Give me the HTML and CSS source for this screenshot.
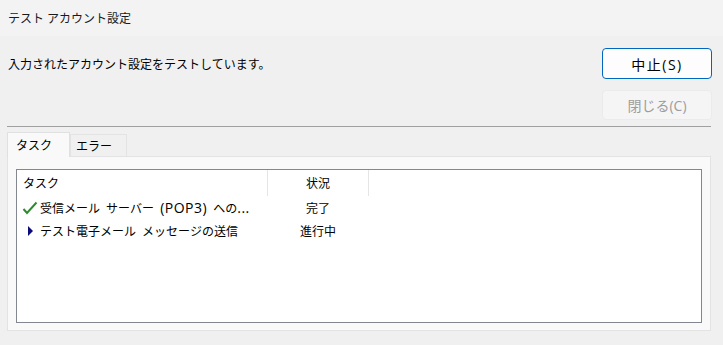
FILE: index.html
```html
<!DOCTYPE html>
<html lang="ja">
<head>
    <meta charset="UTF-8">
    <title>テスト アカウント設定</title>
    <link rel="stylesheet" href="styles.css">
</head>
<body>
    <div class="titlebar">テスト アカウント設定</div>
    <div class="dialog">
        <div class="top">
            <div class="message">入力されたアカウント設定をテストしています。</div>
            <div class="buttons">
                <button class="btn btn-default">中止(S)</button>
                <button class="btn" disabled>閉じる(C)</button>
            </div>
        </div>
        <div class="separator"></div>
        <div class="tabs">
            <div class="tab active">タスク</div>
            <div class="tab">エラー</div>
        </div>
        <div class="panel">
            <div class="list">
                <div class="row header">
                    <div class="col-task">タスク</div>
                    <div class="col-status">状況</div>
                </div>
                <div class="row">
                    <div class="col-task">
                        <span class="icon">
                            <svg width="16" height="16" viewBox="0 0 16 16">
                                <path d="M1.5 9 L5 13 L14.5 2.5" fill="none" stroke="#2f8a2f" stroke-width="2"/>
                            </svg>
                        </span>
                        <span class="label">受信メール サーバー <span class="latin">(POP3)</span> への<span class="latin">...</span></span>
                    </div>
                    <div class="col-status">完了</div>
                </div>
                <div class="row">
                    <div class="col-task">
                        <span class="icon">
                            <svg width="16" height="16" viewBox="0 0 16 16">
                                <path d="M6 3 L11 8 L6 13 Z" fill="#0a0a78"/>
                            </svg>
                        </span>
                        <span class="label">テスト電子メール メッセージの送信</span>
                    </div>
                    <div class="col-status">進行中</div>
                </div>
            </div>
        </div>
    </div>
</body>
</html>
```

FILE: styles.css
```css
body {
    margin: 0;
    font-family: "Open Sans", "Noto Sans CJK JP", sans-serif;
    font-size: 12px;
    color: #000;
    background-color: #f0f0f0;
}
.titlebar {
    height: 36px;
    padding-left: 8px;
    display: flex;
    align-items: center;
    background-color: #f3f3f3;
    color: #1a1a1a;
}
.dialog {
    height: 309px;
    background-color: #f0f0f0;
}
.top {
    display: flex;
    justify-content: space-between;
    padding: 12px 11px 0 8px;
}
.message {
    height: 31px;
    display: flex;
    align-items: center;
}
.buttons {
    display: flex;
    flex-direction: column;
    gap: 11px;
    width: 110px;
}
.btn {
    height: 31px;
    font-family: inherit;
    font-size: 14px;
    color: #000;
    background-color: #fdfdfd;
    border: 1px solid #e5e5e5;
    border-radius: 4px;
    padding: 0;
}
.btn-default {
    border-color: #0067c0;
    letter-spacing: 1.5px;
}
.btn:disabled {
    height: 30px;
    color: #9d9d9d;
    background-color: #f5f5f5;
    border-color: #ebebeb;
}
.separator {
    height: 1px;
    margin: 6px 12px 0 7px;
    background-color: #a0a0a0;
}
.tabs {
    display: flex;
    align-items: flex-end;
    margin: 5px 0 0 7px;
    height: 24px;
}
.tab {
    height: 22px;
    width: 57px;
    padding-left: 5px;
    display: flex;
    align-items: center;
    white-space: nowrap;
    background-color: #f0f0f0;
    border: 1px solid #e3e3e3;
    border-bottom: none;
    box-sizing: border-box;
}
.tab.active {
    height: 25px;
    width: 63px;
    padding-left: 8px;
    margin-bottom: -1px;
    background-color: #f9f9f9;
    border-color: #e0e0e0;
    position: relative;
    z-index: 1;
}
.panel {
    width: 704px;
    height: 175px;
    margin-left: 7px;
    padding: 12px 8px 7px 8px;
    box-sizing: border-box;
    background-color: #f9f9f9;
    border: 1px solid #e3e3e3;
}
.list {
    height: 154px;
    box-sizing: border-box;
    background-color: #fff;
    border: 1px solid #828790;
}
.row {
    display: flex;
    height: 23px;
    align-items: center;
}
.row.header {
    height: 26px;
}
.col-task {
    width: 251px;
    height: 100%;
    display: flex;
    align-items: center;
    padding-left: 5px;
    box-sizing: border-box;
    white-space: nowrap;
}
.label {
    word-spacing: 3px;
}
.latin {
    font-size: 14px;
    letter-spacing: 0.5px;
    word-spacing: 0;
}
.col-status {
    width: 100px;
    height: 100%;
    display: flex;
    align-items: center;
    justify-content: center;
}
.header .col-task {
    padding-left: 6px;
    border-right: 1px solid #e5e5e5;
}
.header .col-status {
    border-right: 1px solid #e5e5e5;
}
.icon {
    width: 18px;
    height: 16px;
    display: flex;
}
```
